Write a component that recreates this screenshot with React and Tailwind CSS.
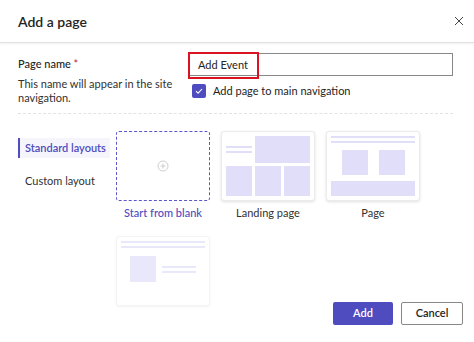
import React from "react";

const Block = ({ className }) => <div className={`bg-[#e0def8] ${className}`} />;

const LandingThumb = () => (
  <div className="flex h-full flex-col gap-[3px] p-[4px]">
    <div className="flex h-[27px] gap-[3px]">
      <div className="flex w-[26px] flex-col justify-center gap-[3px]">
        <Block className="h-[2px]" />
        <Block className="h-[2px]" />
      </div>
      <Block className="flex-1" />
    </div>
    <div className="flex flex-1 gap-[3px]">
      <Block className="flex-1" />
      <Block className="flex-1" />
      <Block className="flex-1" />
    </div>
  </div>
);

const PageThumb = () => (
  <div className="flex h-full flex-col p-[4px]">
    <Block className="h-[2px]" />
    <Block className="mt-[3px] h-[2px]" />
    <div className="mt-[7px] flex h-[25px] justify-around px-[5px]">
      <Block className="w-[26px]" />
      <Block className="w-[26px]" />
    </div>
    <Block className="mt-[6px] flex-1" />
  </div>
);

const ArticleThumb = () => (
  <div className="flex h-full flex-col p-[4px] opacity-70">
    <Block className="h-[2px]" />
    <Block className="mt-[3px] h-[2px]" />
    <div className="mt-[8px] flex gap-[6px] px-[9px]">
      <Block className="h-[26px] w-[26px]" />
      <div className="flex w-[35px] flex-col justify-center gap-[3px]">
        <Block className="h-[2px]" />
        <Block className="h-[2px]" />
      </div>
    </div>
  </div>
);

const Card = ({ children, label, selected, faded }) => (
  <div className="flex w-[94px] flex-col items-center">
    <div
      className={`h-[70px] w-[94px] rounded-[3px] bg-white ${
        selected
          ? "border-[1.5px] border-dashed border-[#5b57c9]"
          : faded
          ? "border border-[#f4f4f6] shadow-[0_1px_3px_rgba(0,0,0,0.05)]"
          : "border border-[#ececef] shadow-[0_1px_3px_rgba(0,0,0,0.12)]"
      }`}
    >
      {children}
    </div>
    {label && (
      <div
        className={`mt-[4px] whitespace-nowrap text-[11px] leading-[16px] ${
          selected ? "font-medium text-[#4f4cc0]" : "text-[#323130]"
        }`}
      >
        {label}
      </div>
    )}
  </div>
);

export default function App() {
  return (
    <div
      className="relative flex h-[342px] w-[474px] flex-col overflow-hidden bg-white text-[#242424]"
      style={{ fontFamily: 'Lato, "Open Sans", sans-serif' }}
    >
      <div className="flex h-[43px] shrink-0 items-center justify-between border-b border-[#e1e1e1] pl-[18px] pr-[8px] shadow-[0_1px_2px_rgba(0,0,0,0.06)]">
        <div className="text-[14px] font-semibold">Add a page</div>
        <svg width="10" height="10" viewBox="0 0 10 10" className="mr-[2px]">
          <path d="M1 1L9 9M9 1L1 9" stroke="#444" strokeWidth="1" />
        </svg>
      </div>

      <div className="mx-[18px] mr-[21px] flex border-b border-dashed border-[#e3e3e3] pt-[10px] pb-[8px]">
        <div className="w-[171px] text-[11px] leading-[14px]">
          <div className="mt-[4px] font-medium">
            Page name <span className="text-[#c4314b]">*</span>
          </div>
          <div className="mt-[6px] pr-[2px] text-[#323130]">
            This name will appear in the site navigation.
          </div>
        </div>
        <div className="flex-1">
          <div className="relative h-[23px] border border-[#8a8886] pl-[8px] text-[11px] leading-[21px]">
            Add Event
            <div className="absolute -top-[2px] -left-[2px] h-[27px] w-[71px] border-2 border-[#d9131f]" />
          </div>
          <div className="mt-[7px] flex items-center gap-[7px] pl-[3px] text-[11px]">
            <div className="flex h-[14px] w-[14px] items-center justify-center rounded-[2px] bg-[#4f4cc0]">
              <svg width="10" height="10" viewBox="0 0 10 10">
                <path d="M2 5.2L4.1 7.2L8 3" fill="none" stroke="white" strokeWidth="1.1" />
              </svg>
            </div>
            <span>Add page to main navigation</span>
          </div>
        </div>
      </div>

      <div className="flex flex-1 pl-[18px] pt-[17px]">
        <div className="w-[98px] pt-[7px] text-[11px]">
          <div className="flex h-[20px] w-[92px] items-center whitespace-nowrap border-l-2 border-[#4f4cc0] bg-[#f5f5fb] pl-[5px] font-semibold text-[#4f4cc0]">
            Standard layouts
          </div>
          <div className="mt-[15px] pl-[7px] text-[#323130]">Custom layout</div>
        </div>
        <div className="grid grid-cols-[94px_94px_94px] content-start gap-x-[11px] gap-y-[15px]">
          <Card label="Start from blank" selected>
            <div className="flex h-full items-center justify-center">
              <svg width="12" height="12" viewBox="0 0 12 12">
                <circle cx="6" cy="6" r="5" fill="none" stroke="#c8c8c8" strokeWidth="0.9" />
                <path d="M6 3.5V8.5M3.5 6H8.5" stroke="#c8c8c8" strokeWidth="0.9" />
              </svg>
            </div>
          </Card>
          <Card label="Landing page">
            <LandingThumb />
          </Card>
          <Card label="Page">
            <PageThumb />
          </Card>
          <Card faded>
            <ArticleThumb />
          </Card>
        </div>
      </div>

      <div className="absolute bottom-[17px] right-[11px] flex gap-[8px]">
        <button className="h-[23px] w-[60px] rounded-[2px] bg-[#4f4cc0] text-[11px] font-semibold text-white">
          Add
        </button>
        <button className="h-[23px] w-[62px] rounded-[2px] border border-[#8a8886] bg-white text-[11px] font-semibold text-[#242424]">
          Cancel
        </button>
      </div>
    </div>
  );
}
